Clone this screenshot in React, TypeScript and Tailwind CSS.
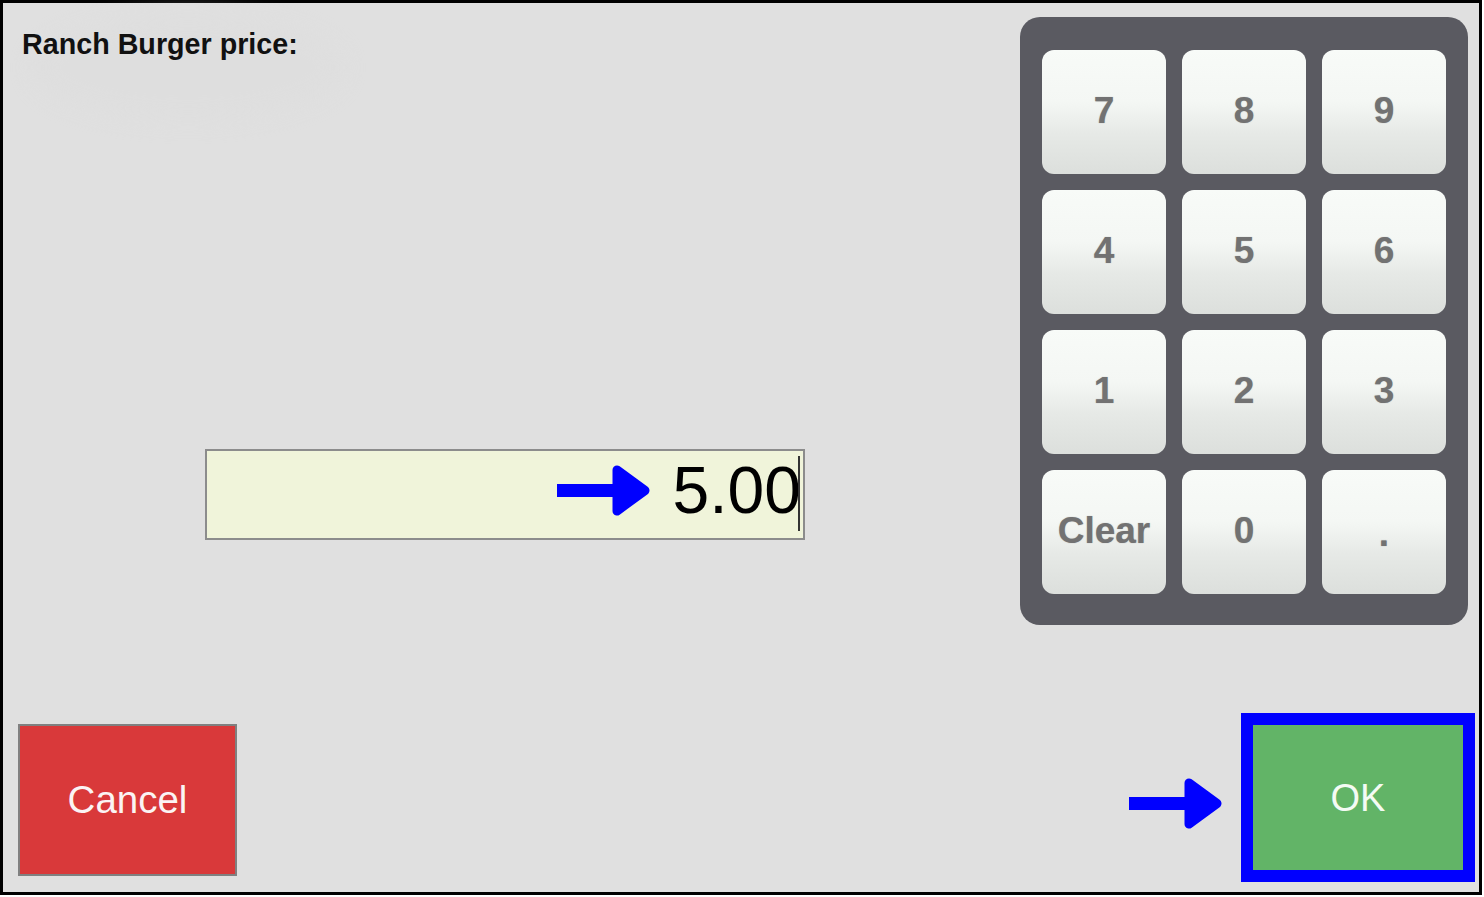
import type { ReactNode } from 'react';

const KEYS = ['7', '8', '9', '4', '5', '6', '1', '2', '3', 'Clear', '0', '.'];

const Arrow = () => (
  <svg width="93" height="51" viewBox="0 0 93 51" className="shrink-0">
    <rect x="0" y="19" width="62" height="13" fill="#0000ff" />
    <path
      d="M60 5 L88 25.5 L60 46 Z"
      fill="#0000ff"
      stroke="#0000ff"
      strokeWidth="9"
      strokeLinejoin="round"
    />
  </svg>
);

const Key = ({ children }: { children: ReactNode }) => (
  <button className="flex h-[124px] w-[124px] items-center justify-center rounded-[12px] bg-[linear-gradient(to_bottom,#f8fbf8_0%,#f4f7f4_42%,#e6e9e6_68%,#dcdfdc_100%)] pb-[3px] font-['Liberation_Sans',Arial,sans-serif] text-[37px] font-bold text-[#727272] [text-shadow:0_0_1px_rgba(90,90,90,0.5)]">
    {children}
  </button>
);

export default function App() {
  return (
    <div className="h-[897px] w-[1484px] bg-white font-['Liberation_Sans',Arial,sans-serif]">
      <div className="relative flex h-[895px] w-[1482px] flex-col border-[3px] border-black bg-[#e0e0e0]">
        {/* faint smudge behind the title */}
        <div className="pointer-events-none absolute left-[30px] top-[12px] h-[105px] w-[310px] rounded-[50%] bg-[#dedede] blur-[10px]" />

        <div className="relative flex">
          <div className="flex flex-1 flex-col pl-[19px]">
            <h1 className="mt-[27px] text-[28.7px] font-bold leading-none text-[#111]">Ranch Burger price:</h1>
            <div className="ml-[183px] mt-[390px] flex h-[91px] w-[600px] items-center justify-end border-2 border-[#8c8c8c] bg-[#f0f4da] pb-[8px] pr-[3px]">
              <Arrow />
              <span className="ml-[23px] text-[66px] leading-none text-black">5.00</span>
              <span className="-ml-[3px] mt-[6px] h-[75px] w-[2px] bg-[#333]" />
            </div>
          </div>

          <div className="mr-[11px] mt-[14px] grid h-[608px] w-[448px] grid-cols-[repeat(3,124px)] grid-rows-[repeat(4,124px)] gap-[16px] rounded-[20px] bg-[#5a5a61] pl-[22px] pt-[33px]">
            {KEYS.map((k) => (
              <Key key={k}>{k === '.' ? <span className="mt-[6px]">.</span> : k}</Key>
            ))}
          </div>
        </div>

        <div className="relative mt-auto flex items-end justify-between pb-[10px] pl-[15px] pr-[4px]">
          <button className="mb-[6px] flex h-[152px] w-[219px] items-center justify-center border-2 border-[#808080] bg-[#d9393a] text-[38.5px] leading-none text-[#fbf4f4]">
            Cancel
          </button>

          <div className="flex items-center">
            <div className="mr-[19px] mt-[12px]">
              <Arrow />
            </div>
            <div className="flex h-[169px] w-[234px] items-center justify-center border-[12px] border-[#0000ff] bg-[#62b467] text-[38px] leading-none text-[#f4fbf4]">
              OK
            </div>
          </div>
        </div>
      </div>
    </div>
  );
}
